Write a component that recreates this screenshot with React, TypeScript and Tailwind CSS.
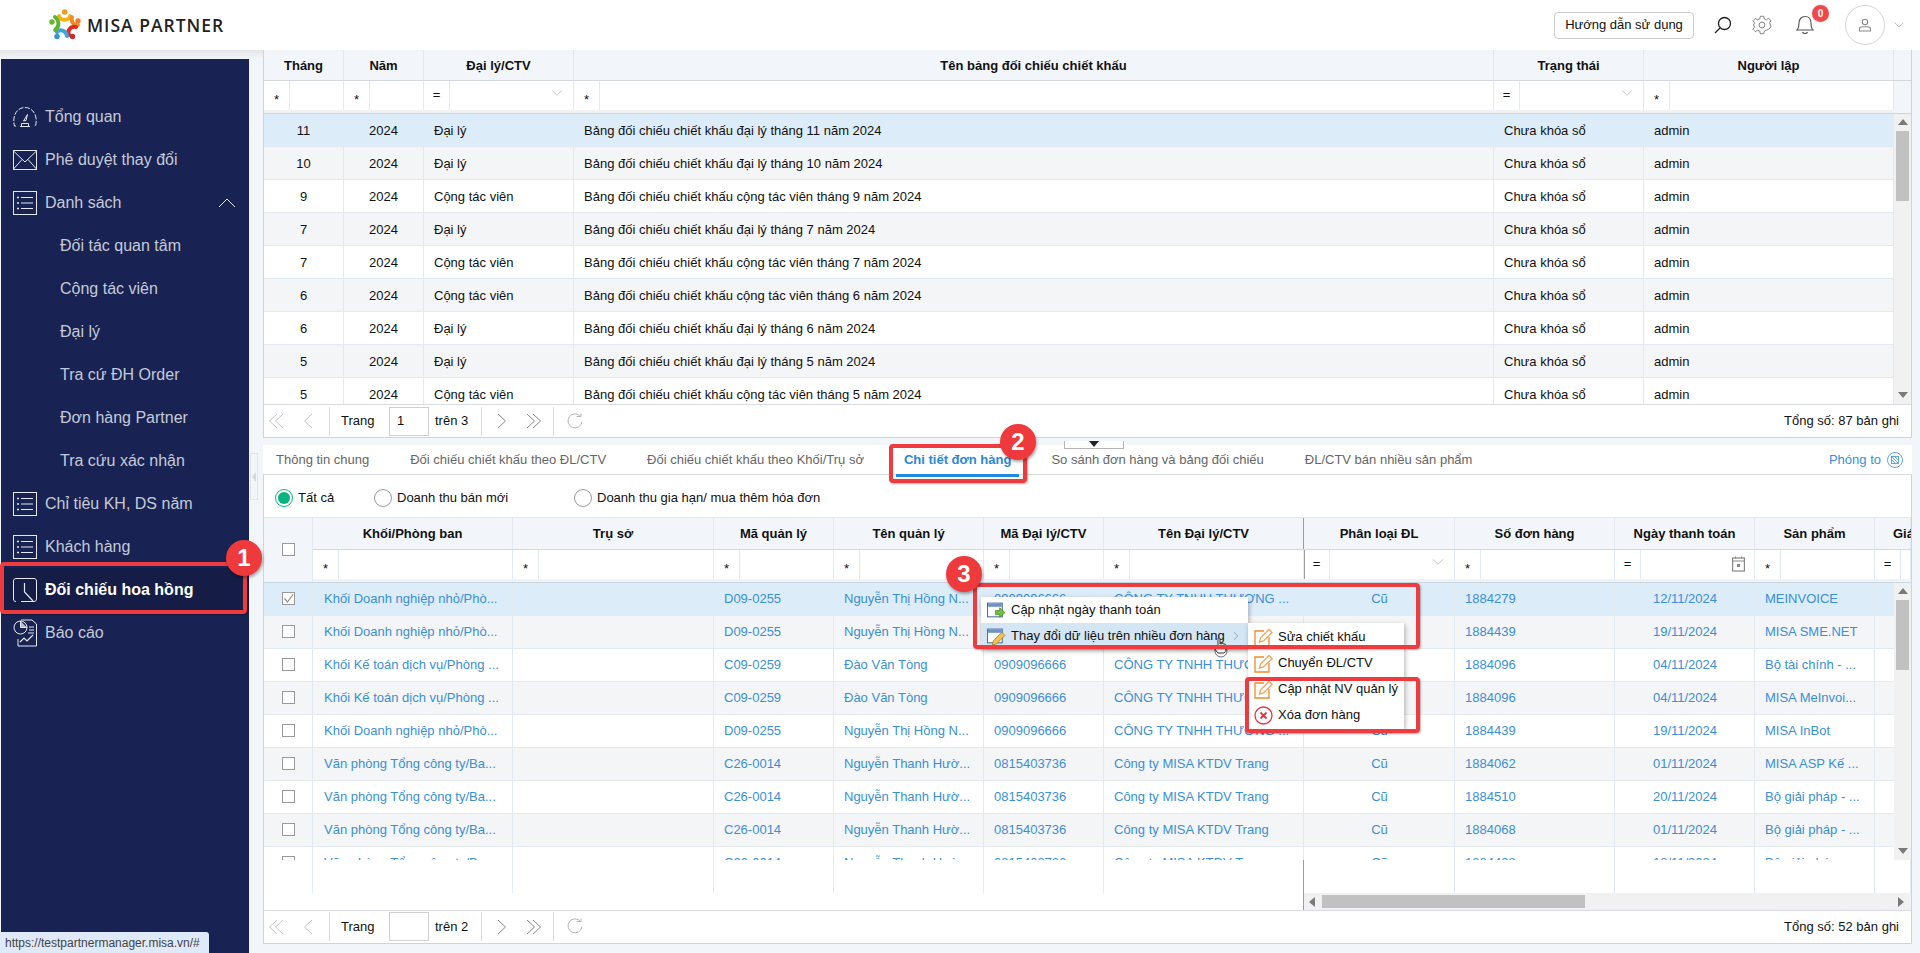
import React from 'react';
import { ChevronRight, ChevronDown } from 'lucide-react';

const topCols = ['w-[80px] justify-center', 'w-[80px] justify-center', 'w-[150px]', 'w-[920px]', 'w-[150px]', 'w-[250px]'];
const topHead = ['Tháng', 'Năm', 'Đại lý/CTV', 'Tên bảng đối chiếu chiết khấu', 'Trạng thái', 'Người lập'];
const topFilter: [string, string][] = [['*', ''], ['*', ''], ['=', 'select'], ['*', ''], ['=', 'select'], ['*', '']];
const topRows = [
  ['11', 'Đại lý', 'đại lý tháng 11'],
  ['10', 'Đại lý', 'đại lý tháng 10'],
  ['9', 'Cộng tác viên', 'cộng tác viên tháng 9'],
  ['7', 'Đại lý', 'đại lý tháng 7'],
  ['7', 'Cộng tác viên', 'cộng tác viên tháng 7'],
  ['6', 'Cộng tác viên', 'cộng tác viên tháng 6'],
  ['6', 'Đại lý', 'đại lý tháng 6'],
  ['5', 'Đại lý', 'đại lý tháng 5'],
  ['5', 'Cộng tác viên', 'cộng tác viên tháng 5'],
];

const botCols = [
  'w-[200px]', 'w-[201px]', 'w-[120px]', 'w-[150px]', 'w-[120px]', 'w-[200px]',
  'w-[151px] justify-center', 'w-[160px]', 'w-[140px] justify-center', 'w-[120px]', 'w-[36px]',
];
const botHead = ['Khối/Phòng ban', 'Trụ sở', 'Mã quản lý', 'Tên quản lý', 'Mã Đại lý/CTV', 'Tên Đại lý/CTV', 'Phân loại ĐL', 'Số đơn hàng', 'Ngày thanh toán', 'Sản phẩm', 'Giá'];
const botFilter: [string, string][] = [['*', ''], ['*', ''], ['*', ''], ['*', ''], ['*', ''], ['*', ''], ['=', 'select'], ['*', ''], ['=', 'date'], ['*', ''], ['=', '']];

const doanhNghiep = ['Khối Doanh nghiệp nhỏ/Phò...', '', 'D09-0255', 'Nguyễn Thị Hồng N...', '0909096666', 'CÔNG TY TNHH THƯƠNG ...', 'Cũ'];
const keToan = ['Khối Kế toán dịch vụ/Phòng ...', '', 'C09-0259', 'Đào Văn Tòng', '0909096666', 'CÔNG TY TNHH THƯƠNG ...', 'Cũ'];
const vanPhong = ['Văn phòng Tổng công ty/Ba...', '', 'C26-0014', 'Nguyễn Thanh Hườ...', '0815403736', 'Công ty MISA KTDV Trang', 'Cũ'];
const botRows = [
  [...doanhNghiep, '1884279', '12/11/2024', 'MEINVOICE', ''],
  [...doanhNghiep, '1884439', '19/11/2024', 'MISA SME.NET', ''],
  [...keToan, '1884096', '04/11/2024', 'Bộ tài chính - ...', ''],
  [...keToan, '1884096', '04/11/2024', 'MISA MeInvoi...', ''],
  [...doanhNghiep, '1884439', '19/11/2024', 'MISA InBot', ''],
  [...vanPhong, '1884062', '01/11/2024', 'MISA ASP Kế ...', ''],
  [...vanPhong, '1884510', '20/11/2024', 'Bộ giải pháp - ...', ''],
  [...vanPhong, '1884068', '01/11/2024', 'Bộ giải pháp - ...', ''],
  [...vanPhong, '1884428', '18/11/2024', 'Bộ giải pháp - ...', ''],
];

const Logo = () => (
  <svg width="32" height="32" viewBox="0 0 32 32" fill="none" strokeLinecap="round">
    <path d="M10 7 C11 12 20 12 21 7" stroke="#f5b014" strokeWidth="3.8" />
    <path d="M23 8 C22 13 24 16 29 16" stroke="#f08a24" strokeWidth="3.8" />
    <path d="M27 18 C21 17 18 22 20 26" stroke="#dd2a25" strokeWidth="4" />
    <path d="M18 27 C17 21 11 20 8 23" stroke="#3aa6dc" strokeWidth="4" />
    <path d="M6 21 C11 18 10 11 6 8" stroke="#5cb531" strokeWidth="3.8" />
    <circle cx="15.7" cy="3" r="2.8" fill="#f39a1f" />
    <circle cx="29" cy="12" r="2.7" fill="#ee7d2a" />
    <circle cx="23.5" cy="27.5" r="2.7" fill="#cf2a2a" />
    <circle cx="8" cy="27.5" r="2.7" fill="#2e95cf" />
    <circle cx="3" cy="13" r="2.7" fill="#6bb52f" />
  </svg>
);

const GaugeIcon = () => (
  <svg width="24" height="22" viewBox="0 0 24 22" fill="none" stroke="currentColor" strokeWidth="1">
    <path d="M3 20 H1.5 C0.8 17 0.5 15 1 12 C2 6 6 1.5 12 1.5 C18 1.5 22 6 23 12 C23.5 15 23.2 17 22.5 20 H21" strokeDasharray="5 1.5" />
    <path d="M7 20.5 H17 M8.5 17.5 H15.5 V20.5 M8.5 17.5 V20.5" />
    <path d="M10.5 15 L14.5 8.5 L13 14.5 Z" />
  </svg>
);
const MailIcon = () => (
  <svg width="24" height="20" viewBox="0 0 24 20" fill="none" stroke="currentColor" strokeWidth="1">
    <rect x="0.5" y="0.5" width="23" height="19" />
    <path d="M0.5 1 L12 12 L23.5 1 M0.5 19 L9 9.5 M23.5 19 L15 9.5" />
  </svg>
);
const ListIcon = () => (
  <svg width="24" height="24" viewBox="0 0 24 24" fill="none" stroke="currentColor" strokeWidth="1">
    <rect x="0.5" y="0.5" width="23" height="23" />
    <path d="M8 6.5 H20 M8 12 H20 M8 17.5 H20" />
    <path d="M4 6.5 H6 M4 12 H6 M4 17.5 H6" strokeWidth="1.6" />
  </svg>
);
const ClockIcon = () => (
  <svg width="24" height="24" viewBox="0 0 24 24" fill="none" stroke="currentColor" strokeWidth="1">
    <path d="M3 23.5 C1.2 23.5 0.5 22.5 0.5 21 V3 C0.5 1.5 1.5 0.5 3 0.5 H21 C22.5 0.5 23.5 1.5 23.5 3 V21 C23.5 22.5 22.5 23.5 21 23.5 H8" />
    <path d="M11.5 5 V14 L20 23" strokeWidth="1.2" />
  </svg>
);
const ReportIcon = () => (
  <svg width="24" height="28" viewBox="0 0 24 28" fill="none" stroke="currentColor" strokeWidth="1">
    <path d="M8 1 H19 L23.5 5 V27 H5 V20" />
    <circle cx="7.5" cy="8.5" r="6.5" />
    <path d="M7.5 2 V8.5 H14" fill="#fff" fillOpacity="0.7" />
    <path d="M16 8 H21 M16 11 H21 M15 14 H21" />
    <path d="M7 23 L11 19 L14 22 L20 16" strokeWidth="1.2" />
  </svg>
);

const NavItem = ({ icon, label, sub, active, chevron }: { icon?: React.ReactNode; label: string; sub?: boolean; active?: boolean; chevron?: boolean }) => (
  <div className={`flex h-[43px] items-center ${active ? 'bg-[#151c45] border-l-[3px] border-[#0f6fe0] pl-[9px] font-bold text-white' : sub ? 'pl-[59px] text-[#c5cad8]' : 'pl-[12px] text-[#c5cad8]'}`}>
    {icon && <span className="flex w-[32px] shrink-0 items-center text-[#e6e8ef]">{icon}</span>}
    <span>{label}</span>
    {chevron && (
      <svg className="ml-auto mr-[13px]" width="18" height="10" viewBox="0 0 18 10" fill="none" stroke="#e6e8ef" strokeWidth="1">
        <path d="M1 9 L9 1 L17 9" />
      </svg>
    )}
  </div>
);

const FilterCell = ({ op, kind, width }: { op: string; kind: string; width: string }) => (
  <div className={`flex h-[29px] shrink-0 overflow-hidden border-r border-[#e3e9f0] ${width.split(' ')[0]}`}>
    <div className={`flex w-[26px] shrink-0 justify-center border-r border-[#e3e9f0] ${op === '*' ? 'pt-[9px]' : 'pt-[4px]'}`}>{op}</div>
    <div className="flex flex-1 items-center justify-end pr-[7px]">
      {kind === 'select' && <ChevronDown size={18} strokeWidth={0.9} className="mb-[5px] text-[#aaa]" />}
      {kind === 'date' && (
        <svg className="mr-[2px]" width="13" height="16" viewBox="0 0 13 16" fill="none" stroke="#888" strokeWidth="1.2">
          <rect x="0.6" y="2" width="11.8" height="13" />
          <path d="M0.6 5 H12.4 M3.5 0.5 V2.5 M9.5 0.5 V2.5" />
          <rect x="5" y="8" width="3" height="3" fill="#888" stroke="none" />
        </svg>
      )}
    </div>
  </div>
);

const Box = ({ checked }: { checked?: boolean }) => (
  <span className="relative block h-[13px] w-[13px] border border-[#9a9a9a] bg-white">
    {checked && (
      <svg className="absolute -left-px -top-px" width="13" height="13" viewBox="0 0 13 13" fill="none" stroke="#8c8c8c" strokeWidth="1.2">
        <path d="M2.5 6.5 L5.5 10 L11 2.5" />
      </svg>
    )}
  </span>
);

const Radio = ({ label, on, className }: { label: string; on?: boolean; className: string }) => (
  <div className={`flex items-center gap-[5px] ${className}`}>
    <span className={`flex h-[18px] w-[18px] items-center justify-center rounded-full border ${on ? 'border-[#08b47e]' : 'border-[#9a9a9a]'}`}>
      {on && <span className="h-[12px] w-[12px] rounded-full bg-[#08b47e]" />}
    </span>
    <span>{label}</span>
  </div>
);

const Chevrons = ({ dir, double }: { dir: 'left' | 'right'; double?: boolean }) => (
  <svg width={double ? 16 : 10} height="16" viewBox={double ? '0 0 16 16' : '0 0 10 16'} fill="none" stroke="currentColor" strokeWidth="1">
    {dir === 'left' && <path d="M9 1 L1.5 8 L9 15" />}
    {dir === 'left' && double && <path d="M15 1 L7.5 8 L15 15" />}
    {dir === 'right' && <path d="M1 1 L8.5 8 L1 15" />}
    {dir === 'right' && double && <path d="M7 1 L14.5 8 L7 15" />}
  </svg>
);

const Pager = ({ page, pages, total }: { page: string; pages: string; total: string }) => (
  <div className="flex h-[32px] items-center bg-white">
    <div className="flex h-[29px] w-[66px] items-center border-r border-[#d8dce0] pl-[4px] text-[#c4c4c4]">
      <Chevrons dir="left" double />
      <span className="ml-[19px]"><Chevrons dir="left" /></span>
    </div>
    <span className="ml-[11px] w-[48px]">Trang</span>
    <span className="flex h-[29px] w-[40px] items-center border border-[#d0d0d0] pl-[7px]">{page}</span>
    <span className="ml-[6px] w-[46px]">trên {pages}</span>
    <div className="flex h-[29px] w-[73px] items-center border-x border-[#d8dce0] pl-[15px] text-[#888]">
      <Chevrons dir="right" />
      <span className="ml-[19px]"><Chevrons dir="right" double /></span>
    </div>
    <svg className="ml-[12px]" width="17" height="17" viewBox="0 0 17 17" fill="none" stroke="#b5b5b5" strokeWidth="1">
      <path d="M14.5 3.5 A7 7 0 1 0 16 8.5" />
      <path d="M10.5 3.5 H15 V0.5" />
    </svg>
    <span className="ml-auto mr-[12px]">Tổng số: {total} bản ghi</span>
  </div>
);

const Arrow = ({ dir }: { dir: 'up' | 'down' | 'left' | 'right' }) => {
  const points = { up: '0,6 5,0 10,6', down: '0,0 5,6 10,0', left: '6,0 0,5 6,10', right: '0,0 6,5 0,10' }[dir];
  return (
    <svg width="10" height="10" viewBox="0 0 10 10" fill="#7a7a7a">
      <polygon points={points} />
    </svg>
  );
};

const WindowIcon = ({ pencil }: { pencil?: boolean }) => (
  <svg width="19" height="19" viewBox="0 0 18 18" fill="none">
    <rect x="0.5" y="2" width="14" height="13" fill="#fff" stroke="#4d6f9c" />
    <rect x="1" y="2.5" width="13" height="3" fill="#6d93c4" />
    {pencil ? (
      <path d="M5 17 L6 13 L14 5 L17 8 L9 16 Z" fill="#f2c14e" stroke="#a5752b" strokeWidth="0.7" />
    ) : (
      <path d="M8 9 H12 V6.5 L17 11 L12 15.5 V13 H8 Z" fill="#6fbf3b" stroke="#4d8a26" strokeWidth="0.7" />
    )}
  </svg>
);
const EditIcon = () => (
  <svg width="19" height="19" viewBox="0 0 19 19" fill="none" stroke="#f08a24" strokeWidth="1.3">
    <path d="M10 3 H1 V18 H15 V9" />
    <path d="M5.5 14 L6.5 10 L15 1.5 L18 4.5 L9.5 13 Z" stroke="#f2a45a" />
  </svg>
);
const DeleteIcon = () => (
  <svg width="19" height="19" viewBox="0 0 19 19" fill="none" stroke="#e8323c" strokeWidth="1.3">
    <circle cx="9.5" cy="9.5" r="8.5" />
    <path d="M6.5 6.5 L12.5 12.5 M12.5 6.5 L6.5 12.5" strokeWidth="1.8" />
  </svg>
);

const MenuRow = ({ icon, label }: { icon: React.ReactNode; label: string }) => (
  <div className="flex h-[26px] items-center pl-[6px] pr-[4px]">
    <span className="w-[24px] shrink-0">{icon}</span>
    <span>{label}</span>
  </div>
);

const Badge = ({ n, className }: { n: string; className: string }) => (
  <div className={`absolute flex h-[36px] w-[36px] items-center justify-center rounded-full bg-[#ef3a3d] text-[24px] font-bold text-white shadow-[1px_2px_3px_rgba(0,0,0,0.35)] ${className}`}>{n}</div>
);

export default function App() {
  return (
    <div className="relative h-[953px] w-[1920px] overflow-hidden bg-[#f2f6fa] font-['Liberation_Sans',Arial,sans-serif] text-[13px] text-[#111]">
      <header className="flex h-[50px] items-center bg-white">
        <div className="ml-[49px] flex items-center gap-[6px]">
          <Logo />
          <span className="font-['Open_Sans',sans-serif] text-[17.5px] font-semibold tracking-[1px] text-[#222]">MISA PARTNER</span>
        </div>
        <button className="ml-auto flex h-[27px] w-[140px] items-center justify-center rounded-[4px] border border-[#ccc]">Hướng dẫn sử dụng</button>
        <svg className="ml-[20px]" width="18" height="18" viewBox="0 0 18 18" fill="none" stroke="#222" strokeWidth="1.3">
          <circle cx="10.5" cy="7.5" r="6" />
          <path d="M6 12 L1 17" />
        </svg>
        <svg className="ml-[20px]" width="20" height="20" viewBox="0 0 24 24" fill="none" stroke="#777" strokeWidth="1.1">
          <circle cx="12" cy="12" r="3.5" />
          <path d="M10 1.5 H14 L14.7 4.6 L17.4 5.7 L20 4 L22.8 6.8 L21 9.5 L22.2 12 L22.8 14.2 L20 17 L17.4 18.3 L14.7 19.4 L14 22.5 H10 L9.3 19.4 L6.6 18.3 L4 20 L1.2 17.2 L3 14.5 L1.8 12 L3 9.5 L1.2 6.8 L4 4 L6.6 5.7 L9.3 4.6 Z" />
        </svg>
        <div className="relative ml-[24px]">
          <svg width="18" height="20" viewBox="0 0 18 20" fill="none" stroke="#555" strokeWidth="1.1">
            <path d="M1 15 C3 13 3 11 3 8 C3 4 5.5 1.5 9 1.5 C12.5 1.5 15 4 15 8 C15 11 15 13 17 15 Z" />
            <path d="M6.5 17 C7 19 11 19 11.5 17" />
          </svg>
          <span className="absolute left-[16px] top-[-10px] flex h-[17px] w-[17px] items-center justify-center rounded-full bg-[#f0474a] text-[10px] font-bold text-white shadow-[0_0_0_1px_#eee]">0</span>
        </div>
        <div className="ml-[31px] flex h-[40px] w-[40px] items-center justify-center rounded-full border border-[#d5d5d5]">
          <svg width="14" height="14" viewBox="0 0 14 14" fill="none" stroke="#8a8a8a" strokeWidth="1.1">
            <circle cx="7" cy="4" r="2.7" />
            <path d="M1.5 13 V11 C1.5 9.5 3 8.7 4.5 8.7 H9.5 C11 8.7 12.5 9.5 12.5 11 V13 Z" />
          </svg>
        </div>
        <ChevronDown size={16} strokeWidth={1.5} className="ml-[6px] mr-[13px] text-[#b9bdc6]" />
      </header>

      <div className="flex h-[903px]">
        <aside className="relative flex w-[263px] shrink-0 flex-col">
          <div className="h-[9px] bg-linear-to-b from-[#e3e5e7] to-[#f2f6fa]" />
          <nav className="ml-px w-[248px] flex-1 bg-[#192353] pt-[36px] text-[16px]">
            <NavItem icon={<GaugeIcon />} label="Tổng quan" />
            <NavItem icon={<MailIcon />} label="Phê duyệt thay đổi" />
            <NavItem icon={<ListIcon />} label="Danh sách" chevron />
            <NavItem sub label="Đối tác quan tâm" />
            <NavItem sub label="Cộng tác viên" />
            <NavItem sub label="Đại lý" />
            <NavItem sub label="Tra cứ ĐH Order" />
            <NavItem sub label="Đơn hàng Partner" />
            <NavItem sub label="Tra cứu xác nhận" />
            <NavItem icon={<ListIcon />} label="Chỉ tiêu KH, DS năm" />
            <NavItem icon={<ListIcon />} label="Khách hàng" />
            <NavItem icon={<ClockIcon />} label="Đối chiếu hoa hồng" active />
            <NavItem icon={<ReportIcon />} label="Báo cáo" />
          </nav>
          <div className="absolute left-[250px] top-[403px] flex h-[47px] w-[8px] items-center justify-center border border-[#e2e5e8] bg-[#f2f6fa]">
            <span className="h-0 w-0 border-y-[5px] border-r-[4px] border-y-transparent border-r-[#d5d9de]" />
          </div>
        </aside>

        <main className="mr-[8px] flex w-[1649px] flex-col">
          {/* top grid */}
          <section className="flex h-[388px] flex-col border-x border-b border-[#cfd4d9] bg-white">
            <div className="flex h-[31px] border-b border-[#d3d8dd] bg-[#f2f6fa] font-bold">
              {topHead.map((h, i) => (
                <div key={h} className={`flex items-center justify-center border-r border-[#e3e9f0] pt-[1px] ${topCols[i].split(' ')[0]}`}>{h}</div>
              ))}
            </div>
            <div className="flex h-[32px] bg-[#f2f6fa]">
              <div className="flex h-[32px] w-[1630px] border-b-[3px] border-[#f0f2f4] bg-white">
                {topFilter.map(([op, kind], i) => (
                  <FilterCell key={i} op={op} kind={kind} width={topCols[i]} />
                ))}
              </div>
            </div>
            <div className="flex h-[293px] overflow-hidden border-t border-[#c6d6e3]">
              <div className="w-[1630px] shrink-0">
                {topRows.map((r, i) => (
                  <div key={i} className={`flex h-[33px] border-b border-[#e3e9f0] ${i === 0 ? 'bg-[#ddecf9] border-[#c5dcf0]' : i % 2 ? 'bg-[#f4f5f6]' : 'bg-white'}`}>
                    {[r[0], '2024', r[1], `Bảng đối chiếu chiết khấu ${r[2]} năm 2024`, 'Chưa khóa sổ', 'admin'].map((c, j) => (
                      <div key={j} className={`flex items-center border-r border-[#e3e9f0] px-[10px] pt-[1px] ${topCols[j]}`}>{c}</div>
                    ))}
                  </div>
                ))}
              </div>
              <div className="flex w-[17px] flex-col items-center bg-[#f1f1f1] pt-[5px]">
                <Arrow dir="up" />
                <div className="mt-[2px] h-[70px] w-[13px] bg-[#c1c1c1]" />
                <div className="mt-auto pb-[2px]"><Arrow dir="down" /></div>
              </div>
            </div>
            <div className="border-t border-[#d8dce0]">
              <Pager page="1" pages="3" total="87" />
            </div>
          </section>

          {/* tabs */}
          <div className="mt-[7px] flex h-[30px] items-center border-b border-[#d8dce0] bg-white pl-[13px] text-[#666]">
            <span className="mr-[41px]">Thông tin chung</span>
            <span className="mr-[41px]">Đối chiếu chiết khấu theo ĐL/CTV</span>
            <span className="mr-[40px]">Đối chiếu chiết khấu theo Khối/Trụ sở</span>
            <span className="relative mr-[40px] font-bold text-[#2b86d8]">
              Chi tiết đơn hàng
              <span className="absolute -bottom-[8px] -left-[8px] -right-[8px] h-[3px] bg-[#2188e0]" />
            </span>
            <span className="mr-[41px]">So sánh đơn hàng và bảng đối chiếu</span>
            <span>ĐL/CTV bán nhiều sản phẩm</span>
            <span className="ml-auto mr-[9px] flex items-center gap-[6px] text-[#3a8fd9]">
              Phóng to
              <svg width="16" height="16" viewBox="0 0 16 16" fill="none" stroke="#3a8fd9" strokeWidth="0.8">
                <circle cx="8" cy="8" r="7.5" />
                <rect x="4.5" y="4.5" width="7" height="7" />
                <path d="M5 5 L11 11 M8 5 L11 8 M5 8 L8 11" />
              </svg>
            </span>
          </div>

          {/* bottom grid */}
          <section className="flex h-[469px] flex-col border-x border-b border-[#cfd4d9] bg-white">
            <div className="flex h-[43px] items-center border-b border-[#e3e9f0] pt-[4px]">
              <Radio label="Tất cả" on className="ml-[11px] w-[99px]" />
              <Radio label="Doanh thu bán mới" className="w-[200px]" />
              <Radio label="Doanh thu gia hạn/ mua thêm hóa đơn" className="" />
            </div>
            <div className="flex h-[64px] bg-[#f2f6fa]">
              <div className="flex w-[49px] shrink-0 items-center justify-center border-r border-[#e3e9f0]"><Box /></div>
              <div className="w-[1598px] overflow-hidden">
                <div className="flex h-[32px] border-b border-[#d3d8dd] font-bold">
                  {botHead.map((h, i) => (
                    <div key={i} className={`flex shrink-0 items-center whitespace-nowrap border-r ${i === 10 ? 'pl-[18px]' : 'justify-center'} ${i === 5 ? 'border-[#9c9c9c]' : 'border-[#e3e9f0]'} ${botCols[i].split(' ')[0]}`}>{h}</div>
                  ))}
                </div>
                <div className="flex h-[32px] border-b-[3px] border-[#f0f2f4] bg-white">
                  {botFilter.map(([op, kind], i) => (
                    <div key={i} className={i === 5 ? 'shadow-[1px_0_0_#9c9c9c]' : ''}>
                      <FilterCell op={op} kind={kind} width={botCols[i]} />
                    </div>
                  ))}
                </div>
              </div>
            </div>
            <div className="flex h-[279px] overflow-hidden border-t border-[#c6d6e3]">
              <div className="w-[1630px] shrink-0 overflow-hidden">
                {botRows.map((r, i) => (
                  <div key={i} className={`flex h-[33px] border-b border-[#e3e9f0] text-[#3a8fd9] ${i === 0 ? 'bg-[#ddecf9] border-[#c5dcf0]' : i % 2 ? 'bg-[#f4f5f6]' : 'bg-white'}`}>
                    <div className="flex w-[49px] shrink-0 items-center justify-center border-r border-[#e3e9f0]"><Box checked={i === 0} /></div>
                    {r.map((c, j) => (
                      <div key={j} className={`flex shrink-0 items-center overflow-hidden whitespace-nowrap border-r border-[#e3e9f0] pr-[9px] ${j === 0 ? 'pl-[11px]' : 'pl-[10px]'} ${botCols[j]}`}>{c}</div>
                    ))}
                  </div>
                ))}
              </div>
              <div className="flex w-[17px] flex-col items-center bg-[#f1f1f1] pt-[5px]">
                <Arrow dir="up" />
                <div className="mt-[2px] h-[70px] w-[13px] bg-[#c1c1c1]" />
                <div className="mt-auto pb-[2px]"><Arrow dir="down" /></div>
              </div>
            </div>
            <div className="flex h-[33px]">
              <div className="w-[49px] shrink-0 border-r border-[#e3e9f0]" />
              {botCols.map((c, i) => (
                <div key={i} className={`shrink-0 border-r ${i === 5 ? 'border-[#9c9c9c]' : 'border-[#e3e9f0]'} ${c.split(' ')[0]}`} />
              ))}
            </div>
            <div className="flex h-[17px]">
              <div className="w-[1040px] shrink-0 border-r border-[#9c9c9c]" />
              <div className="flex flex-1 items-center bg-[#f1f1f1] pl-[5px] pr-[3px]">
                <Arrow dir="left" />
                <div className="ml-[3px] h-[13px] w-[263px] bg-[#c1c1c1]" />
                <div className="ml-auto"><Arrow dir="right" /></div>
              </div>
            </div>
            <div className="border-t border-[#d8dce0]">
              <Pager page="" pages="2" total="52" />
            </div>
          </section>
        </main>
      </div>

      {/* overlays: status bubble, context menus and callouts */}
      <div className="absolute bottom-0 left-0 flex h-[21px] w-[209px] items-center rounded-tr-[3px] bg-[#dee9f9] pl-[5px] text-[12px] text-[#444]">https://testpartnermanager.misa.vn/#</div>

      <div className="absolute left-[1064px] top-[441px] flex h-[8px] w-[60px] items-start justify-center border border-t-0 border-[#b5b5b5] bg-white">
        <span className="h-0 w-0 border-x-[5px] border-t-[6px] border-x-transparent border-t-[#222]" />
      </div>

      <div className="absolute left-[981px] top-[597px] w-[267px] bg-white shadow-[1px_2px_5px_rgba(0,0,0,0.3)]">
        <MenuRow icon={<WindowIcon />} label="Cập nhật ngày thanh toán" />
        <div className="flex h-[26px] items-center bg-[#d4e6f4] pl-[6px]">
          <span className="w-[24px] shrink-0"><WindowIcon pencil /></span>
          <span>Thay đổi dữ liệu trên nhiều đơn hàng</span>
          <ChevronRight size={14} strokeWidth={1} className="ml-auto mr-[5px] text-[#777]" />
        </div>
      </div>
      <div className="absolute left-[1248px] top-[623px] w-[156px] bg-white py-[1px] shadow-[1px_2px_5px_rgba(0,0,0,0.3)]">
        <MenuRow icon={<EditIcon />} label="Sửa chiết khấu" />
        <MenuRow icon={<EditIcon />} label="Chuyển ĐL/CTV" />
        <MenuRow icon={<EditIcon />} label="Cập nhật NV quản lý" />
        <MenuRow icon={<DeleteIcon />} label="Xóa đơn hàng" />
      </div>
      <svg className="absolute left-[1212px] top-[636px]" width="18" height="22" viewBox="0 0 18 22" fill="#fff" stroke="#333" strokeWidth="1">
        <path d="M6 11 V3 C6 1.5 8 1.5 8 3 V8 C8 7 10 7 10 8 C10 7 12 7 12 8.5 C12 7.5 14 8 14 9.5 V13 C14 15 13 16 12 17 H6 L2 12 C1.5 10.5 3 10 4 11 Z" />
        <circle cx="9" cy="15" r="6" fill="none" strokeOpacity="0.7" />
      </svg>

      <div className="absolute left-0 top-[562px] h-[52px] w-[247px] rounded-[4px] border-[4px] border-[#ee3b3f] shadow-[1px_1px_2px_rgba(0,0,0,0.3)]" />
      <div className="absolute left-[889px] top-[444px] h-[39px] w-[138px] rounded-[4px] border-[4px] border-[#ee3b3f] shadow-[1px_1px_2px_rgba(0,0,0,0.3)]" />
      <div className="absolute left-[973px] top-[583px] h-[66px] w-[447px] rounded-[4px] border-[4px] border-[#ee3b3f] shadow-[1px_1px_2px_rgba(0,0,0,0.3)]" />
      <div className="absolute left-[1245px] top-[677px] h-[56px] w-[175px] rounded-[4px] border-[4px] border-[#ee3b3f] shadow-[1px_1px_2px_rgba(0,0,0,0.3)]" />
      <Badge n="1" className="left-[226px] top-[540px]" />
      <Badge n="2" className="left-[1000px] top-[424px]" />
      <Badge n="3" className="left-[946px] top-[556px]" />
    </div>
  );
}
